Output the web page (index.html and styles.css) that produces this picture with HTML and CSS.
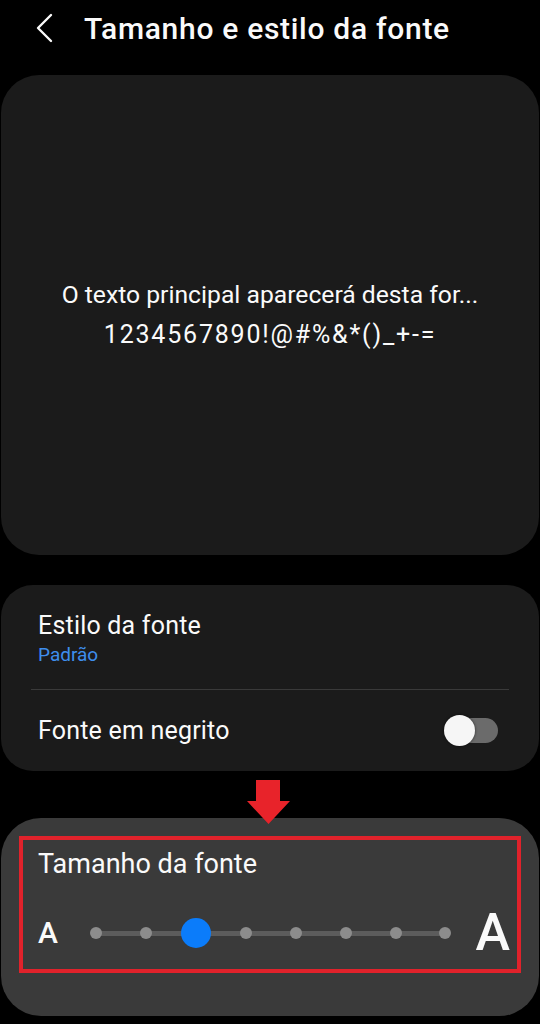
FILE: index.html
```html
<!DOCTYPE html>
<html lang="pt-BR">
<head>
    <meta charset="UTF-8">
    <meta name="viewport" content="width=device-width, initial-scale=1.0">
    <title>Tamanho e estilo da fonte</title>
    <link rel="stylesheet" href="styles.css">
</head>
<body>
    <!-- Top bar -->
    <header class="topbar">
        <svg class="back" width="18" height="30" viewBox="0 0 18 30">
            <polyline points="15,2 2,15 15,28" fill="none" stroke="#fafafa" stroke-width="2.4" stroke-linecap="round" stroke-linejoin="round"/>
        </svg>
        <h1 class="title">Tamanho e estilo da fonte</h1>
    </header>

    <!-- Preview -->
    <div class="card preview">
        <p>O texto principal aparecerá desta for...<br><span class="chars">1234567890!@#%&amp;*()_+-=</span></p>
    </div>

    <!-- Font style options -->
    <div class="card settings">
        <div class="row row-top">
            <div class="row-label">Estilo da fonte</div>
            <div class="row-value">Padrão</div>
        </div>
        <div class="divider"></div>
        <div class="row row-switch">
            <div class="row-label">Fonte em negrito</div>
            <div class="toggle">
                <span class="knob"></span>
            </div>
        </div>
    </div>

    <!-- Font size -->
    <div class="card size">
        <svg class="pointer" width="43" height="44" viewBox="0 0 43 44">
            <polygon points="9,0 33,0 33,21 43,21 21.5,44 0,21 9,21" fill="#e8232a"/>
        </svg>
        <div class="highlight">
            <div class="size-label">Tamanho da fonte</div>
            <div class="slider">
                <span class="a-small">A</span>
                <div class="track">
                    <span class="stop"><i class="dot"></i></span>
                    <span class="stop"><i class="dot"></i></span>
                    <span class="stop"><i class="thumb"></i></span>
                    <span class="stop"><i class="dot"></i></span>
                    <span class="stop"><i class="dot"></i></span>
                    <span class="stop"><i class="dot"></i></span>
                    <span class="stop"><i class="dot"></i></span>
                    <span class="stop"><i class="dot"></i></span>
                </div>
                <span class="a-large">A</span>
            </div>
        </div>
    </div>
</body>
</html>
```

FILE: styles.css
```css
body {
    margin: 0;
    background-color: #000;
    color: #fafafa;
    font-family: Roboto, "Liberation Sans", sans-serif;
}

.topbar {
    display: flex;
    align-items: center;
    height: 56px;
    padding-left: 36px;
}

.back {
    display: block;
}

.title {
    margin: 0 0 0 30px;
    font-size: 30px;
    font-weight: 500;
    letter-spacing: 0.7px;
}

.card {
    background-color: #1b1b1b;
    margin: 0 1px;
}

.preview {
    height: 480px;
    margin-top: 19px;
    border-radius: 38px;
    display: flex;
    align-items: center;
    justify-content: center;
    text-align: center;
}

.preview p {
    margin: 0;
    font-size: 24.7px;
    line-height: 40px;
}

.chars {
    font-size: 25px;
    letter-spacing: 1.8px;
}

.settings {
    margin-top: 30px;
    border-radius: 32px;
}

.row {
    padding: 0 37px;
}

.row-top {
    padding-top: 25px;
    padding-bottom: 23px;
}

.row-label {
    font-size: 25px;
    line-height: 32px;
    letter-spacing: 0.2px;
}

.row-value {
    margin-top: 2px;
    font-size: 19px;
    line-height: 22px;
    color: #3e8eed;
}

.divider {
    height: 1px;
    margin: 0 30px;
    background-color: #3a3a3a;
}

.row-switch {
    display: flex;
    align-items: center;
    justify-content: space-between;
    height: 81px;
    padding-right: 41px;
}

.toggle {
    position: relative;
    width: 50px;
    height: 25px;
    border-radius: 13px;
    background-color: #6b6b6b;
}

.knob {
    position: absolute;
    left: -4px;
    top: -3px;
    width: 31px;
    height: 31px;
    border-radius: 50%;
    background-color: #f6f6f6;
    box-shadow: 0 0 3px rgba(0, 0, 0, 0.6);
}

.size {
    position: relative;
    margin-top: 47px;
    padding: 18px 18px 43px;
    border-radius: 40px;
    background-color: #3a3a3a;
}

.pointer {
    position: absolute;
    left: 246px;
    top: -38px;
}

.highlight {
    border: 4px solid #e0222b;
    padding: 8px 7px 11px 15px;
}

.size-label {
    font-size: 27px;
    line-height: 32px;
}

.slider {
    display: flex;
    align-items: center;
    height: 50px;
    margin-top: 28px;
}

.a-small {
    width: 22px;
    font-size: 30px;
    font-weight: 500;
    line-height: 1;
}

.track {
    position: relative;
    flex: 1;
    display: flex;
    justify-content: space-between;
    align-items: center;
    margin: 0 15px 0 21px;
}

.track::before {
    content: "";
    position: absolute;
    left: 15px;
    right: 15px;
    top: 50%;
    height: 5px;
    margin-top: -2px;
    background-color: #5c5c5c;
}

.stop {
    position: relative;
    display: flex;
    align-items: center;
    justify-content: center;
    width: 30px;
    height: 30px;
}

.dot {
    width: 12px;
    height: 12px;
    border-radius: 50%;
    background-color: #8c8c8c;
}

.thumb {
    width: 30px;
    height: 30px;
    border-radius: 50%;
    background-color: #0b7cfa;
}

.a-large {
    font-size: 52px;
    font-weight: 500;
    line-height: 1;
}
```
